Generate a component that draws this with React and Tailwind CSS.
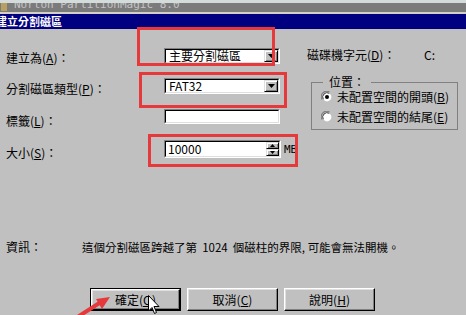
import React from 'react';

const font = "font-['Noto_Sans_CJK_TC','Liberation_Sans',sans-serif]";

function Key({ k }) {
    return (
        <>
            (<span className="underline underline-offset-[1px]">{k}</span>)
        </>
    );
}

function Sunken({ className, children }) {
    return (
        <div className={'border border-t-[#808080] border-l-[#808080] border-b-white border-r-white ' + className}>
            <div className="flex h-full w-full items-center border border-t-black border-l-black border-b-[#dfdfdf] border-r-[#dfdfdf] bg-white">
                {children}
            </div>
        </div>
    );
}

function Raised({ className, children }) {
    return (
        <div className={'flex items-center justify-center border border-t-[#dfdfdf] border-l-[#dfdfdf] border-b-black border-r-black bg-[#c0c0c0] shadow-[inset_1px_1px_0_#fff,inset_-1px_-1px_0_#808080] ' + className}>
            {children}
        </div>
    );
}

function Down() {
    return (
        <svg width="7" height="4" viewBox="0 0 7 4">
            <path d="M0 0h7L3.5 4z" fill="#000" />
        </svg>
    );
}

function Combo({ value }) {
    return (
        <Sunken className="h-[16px] w-[116px]">
            <span className="flex-1 pl-[3px] text-[12px] leading-[14px] text-black">{value}</span>
            <Raised className="h-full w-[14px]">
                <Down />
            </Raised>
        </Sunken>
    );
}

function Radio({ checked }) {
    return (
        <svg width="12" height="12" viewBox="0 0 12 12">
            <path d="M1 8.5A5.5 5.5 0 0 1 8.5 1" stroke="#808080" strokeWidth="1.2" fill="none" />
            <circle cx="6" cy="6" r="4.4" fill="#fff" />
            <path d="M2.3 8.3A4.4 4.4 0 0 1 8.3 2.3" stroke="#404040" strokeWidth="1" fill="none" />
            {checked && <circle cx="6" cy="6" r="2" fill="#000" />}
        </svg>
    );
}

function DlgButton({ children, def }) {
    const inner = (
        <div className="flex h-full w-full items-center justify-center border border-t-white border-l-white border-b-black border-r-black bg-[#c0c0c0] shadow-[inset_-1px_-1px_0_#808080,inset_1px_1px_0_#dfdfdf] text-[12px] text-black">
            {children}
        </div>
    );
    if (def) {
        return <div className="h-[23px] w-[91px] border border-black">{inner}</div>;
    }
    return <div className="h-[23px] w-[91px]">{inner}</div>;
}

export default function App() {
    return (
        <div className={'relative h-[315px] w-[466px] overflow-hidden bg-[#c0c0c0] text-black ' + font}>
            {/* parent window title, mostly hidden */}
            <div className="h-[3px] bg-[#d3dbdb]" />
            <div className="flex h-[9px] items-start overflow-hidden bg-[#7b7b7b]">
                <div className="ml-[1px] mt-[-2px] h-[10px] w-[6px] bg-[#b8a060]" />
                <span className="ml-[7px] mt-[-5px] font-['DejaVu_Sans_Mono',monospace] text-[11px] leading-[14px] text-[#c4c4c4]">
                    Norton PartitionMagic 8.0
                </span>
            </div>
            <div className="h-[2px] bg-[#d4d0c8]" />
            <div className="flex h-[15px] items-center bg-[#000080]">
                <span className="ml-[-4px] text-[11px] font-bold leading-[15px] text-white">建立分割磁區</span>
            </div>

            {/* form body */}
            <div className="flex">
                <div className="flex w-[301px] flex-col">
                    <div className="mt-[19px] flex h-[16px] items-start">
                        <span className="mt-[2px] w-[164px] pl-[6px] text-[12px] leading-[16px]">
                            建立為<Key k="A" />：
                        </span>
                        <Combo value="主要分割磁區" />
                    </div>
                    <div className="mt-[14px] flex h-[16px] items-start">
                        <span className="mt-[3px] w-[164px] pl-[6px] text-[12px] leading-[16px]">
                            分割磁區類型<Key k="P" />：
                        </span>
                        <Combo value="FAT32" />
                    </div>
                    <div className="mt-[15px] flex h-[15px] items-start">
                        <span className="mt-[4px] w-[164px] pl-[6px] text-[12px] leading-[16px]">
                            標籤<Key k="L" />：
                        </span>
                        <Sunken className="h-[15px] w-[116px]" />
                    </div>
                    <div className="mt-[16px] flex h-[18px] items-start">
                        <span className="mt-[5px] w-[164px] pl-[6px] text-[12px] leading-[16px]">
                            大小<Key k="S" />：
                        </span>
                        <Sunken className="h-[18px] w-[117px]">
                            <span className="flex-1 pl-[2px] text-[12px] leading-[16px]">10000</span>
                            <div className="flex h-full w-[13px] flex-col">
                                <Raised className="flex-1">
                                    <svg width="5" height="3" viewBox="0 0 5 3">
                                        <path d="M0 3h5L2.5 0z" fill="#000" />
                                    </svg>
                                </Raised>
                                <Raised className="flex-1">
                                    <svg width="5" height="3" viewBox="0 0 5 3">
                                        <path d="M0 0h5L2.5 3z" fill="#000" />
                                    </svg>
                                </Raised>
                            </div>
                        </Sunken>
                        <span className="ml-[3px] mt-[2px] font-['DejaVu_Sans_Mono',monospace] text-[11px] leading-[16px]">MB</span>
                    </div>
                </div>

                <div className="flex flex-1 flex-col">
                    <div className="ml-[6px] mt-[18px] flex h-[16px] text-[12px] leading-[16px]">
                        <span className="w-[117px]">
                            磁碟機字元<Key k="D" />：
                        </span>
                        <span>C:</span>
                    </div>
                    <fieldset className="ml-[10px] mt-[12px] w-[147px] border border-[#808080] pb-[4px] pl-[9px]">
                        <legend className="ml-[2px] px-[6px] text-[12px] leading-[14px]">位置：</legend>
                        <div className="flex h-[16px] items-center gap-[4px] text-[12px] leading-[16px]">
                            <Radio checked />
                            <span>
                                未配置空間的開頭<Key k="B" />
                            </span>
                        </div>
                        <div className="mt-[4px] flex h-[16px] items-center gap-[4px] text-[12px] leading-[16px]">
                            <Radio />
                            <span>
                                未配置空間的結尾<Key k="E" />
                            </span>
                        </div>
                    </fieldset>
                </div>
            </div>

            {/* info line */}
            <div className="mt-[81px] flex h-[16px] text-[12px] leading-[16px]">
                <span className="w-[82px] pl-[6px]">資訊：</span>
                <span className="text-[11.5px]">這個分割磁區跨越了第{'\u00a0\u00a0'}1024{'\u00a0\u00a0'}個磁柱的界限,{'\u00a0'}可能會無法開機。</span>
            </div>

            {/* buttons */}
            <div className="ml-[90px] mt-[33px] flex gap-[6px]">
                <DlgButton def>
                    確定<Key k="O" />
                </DlgButton>
                <DlgButton>
                    取消<Key k="C" />
                </DlgButton>
                <DlgButton>
                    說明<Key k="H" />
                </DlgButton>
            </div>

            {/* red annotation boxes */}
            <div className="absolute left-[137px] top-[27px] h-[39px] w-[138px] border-[3px] border-[#e5393b]" />
            <div className="absolute left-[139px] top-[72px] h-[36px] w-[148px] border-[3px] border-[#e5393b]" />
            <div className="absolute left-[148px] top-[134px] h-[33px] w-[150px] border-[3px] border-[#e5393b]" />

            {/* red arrow */}
            <svg className="absolute left-[60px] top-[290px]" width="60" height="30" viewBox="0 0 60 30">
                <path d="M16 28 L41 12" stroke="#e5393b" strokeWidth="4" />
                <path d="M50 7 L36 9 L42 19 Z" fill="#e5393b" />
            </svg>

            {/* mouse cursor */}
            <svg className="absolute left-[148px] top-[295px]" width="12" height="20" viewBox="0 0 12 20">
                <path d="M0.5 0.5 V16 L4 12.5 L6.5 18.5 L8.5 17.5 L6 11.5 H11 Z" fill="#fff" stroke="#000" strokeWidth="1" />
            </svg>
        </div>
    );
}
